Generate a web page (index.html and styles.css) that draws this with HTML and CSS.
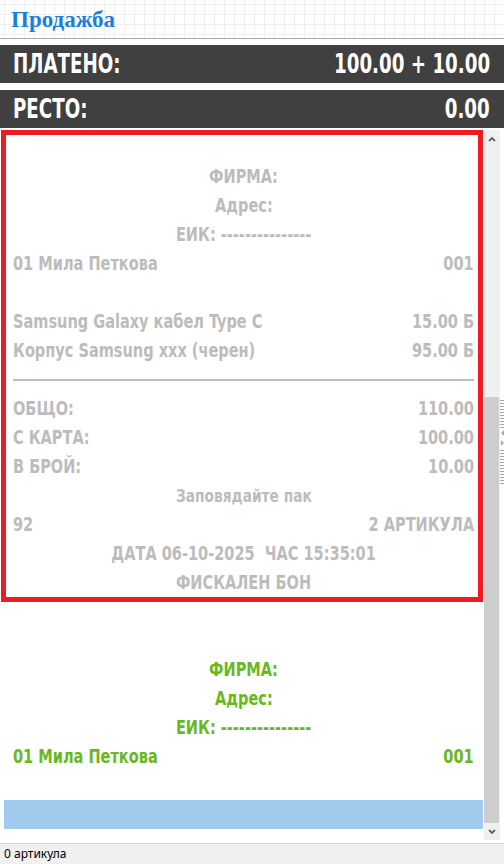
FILE: index.html
```html
<!DOCTYPE html>
<html lang="bg">
<head>
<meta charset="utf-8">
<title>Продажба</title>
<link rel="stylesheet" href="styles.css">
</head>
<body>
<div class="app">
  <header class="titlebar"><h1 class="title">Продажба</h1></header>
  <section class="totals">
    <div class="bar"><span class="bar-label">ПЛАТЕНО:</span><span class="bar-value">100.00 + 10.00</span></div>
    <div class="bar"><span class="bar-label">РЕСТО:</span><span class="bar-value">0.00</span></div>
  </section>
  <section class="viewport">
    <div class="list">
      <div class="receipt selected">
        <div class="line center"><span>ФИРМА:</span></div>
        <div class="line center"><span>Адрес:</span></div>
        <div class="line center"><span>ЕИК: ---------------</span></div>
        <div class="line split"><span>01 Мила Петкова</span><span>001</span></div>
        <div class="line"></div>
        <div class="line split"><span>Samsung Galaxy кабел Type C</span><span>15.00 Б</span></div>
        <div class="line split"><span>Корпус Samsung xxx (черен)</span><span>95.00 Б</span></div>
        <div class="line rule"><hr class="sep"></div>
        <div class="line split"><span>ОБЩО:</span><span>110.00</span></div>
        <div class="line split"><span>С КАРТА:</span><span>100.00</span></div>
        <div class="line split"><span>В БРОЙ:</span><span>10.00</span></div>
        <div class="line center small"><span>Заповядайте пак</span></div>
        <div class="line split"><span>92</span><span>2 АРТИКУЛА</span></div>
        <div class="line center"><span>ДАТА 06-10-2025&nbsp;&nbsp;ЧАС 15:35:01</span></div>
        <div class="line center"><span>ФИСКАЛЕН БОН</span></div>
      </div>
      <div class="receipt current">
        <div class="line center"><span>ФИРМА:</span></div>
        <div class="line center"><span>Адрес:</span></div>
        <div class="line center"><span>ЕИК: ---------------</span></div>
        <div class="line split"><span>01 Мила Петкова</span><span>001</span></div>
      </div>
      <div class="highlight"></div>
    </div>
    <div class="scrollbar">
      <div class="sb-btn">
        <svg width="8" height="6" viewBox="0 0 8 6"><path d="M1 5 L4 2 L7 5" fill="none" stroke="#606060" stroke-width="1.8"/></svg>
      </div>
      <div class="sb-space"></div>
      <div class="sb-thumb"></div>
      <div class="sb-btn">
        <svg width="8" height="6" viewBox="0 0 8 6"><path d="M1 1 L4 4 L7 1" fill="none" stroke="#606060" stroke-width="1.8"/></svg>
      </div>
    </div>
    <div class="grip">
      <svg class="grip-marks" width="4" height="86" viewBox="0 0 4 86">
        <g fill="#a8a8a8">
          <rect x="0" y="0" width="4" height="1"/><rect x="0" y="3" width="4" height="1"/>
          <rect x="0" y="6" width="4" height="1"/><rect x="0" y="9" width="4" height="1"/>
          <rect x="0" y="12" width="4" height="1"/><rect x="0" y="15" width="4" height="1"/>
          <rect x="0" y="18" width="4" height="1"/><rect x="0" y="21" width="4" height="1"/>
          <rect x="0" y="24" width="4" height="1"/><rect x="0" y="27" width="4" height="1"/>
          <path d="M4 30 L1 33 L4 36 Z"/>
          <path d="M1 40 L4 43 L1 46 Z"/>
          <rect x="0" y="50" width="4" height="1"/><rect x="0" y="53" width="4" height="1"/>
          <rect x="0" y="56" width="4" height="1"/><rect x="0" y="59" width="4" height="1"/>
          <rect x="0" y="62" width="4" height="1"/><rect x="0" y="65" width="4" height="1"/>
          <rect x="0" y="68" width="4" height="1"/><rect x="0" y="71" width="4" height="1"/>
          <rect x="0" y="74" width="4" height="1"/><rect x="0" y="77" width="4" height="1"/>
          <rect x="0" y="80" width="4" height="1"/><rect x="0" y="83" width="4" height="1"/>
        </g>
      </svg>
    </div>
  </section>
  <footer class="status">0 артикула</footer>
</div>
</body>
</html>
```

FILE: styles.css
```css
* { box-sizing: border-box; }
html, body { margin: 0; padding: 0; background: #ffffff; }
.app {
  width: 504px;
  height: 864px;
  display: flex;
  flex-direction: column;
  overflow: hidden;
}
.titlebar {
  height: 39px;
  flex: none;
  border-bottom: 1px solid #a8a8a8;
  background-color: #ffffff;
  background-image:
    linear-gradient(to right, #efefef 1px, transparent 1px),
    linear-gradient(to bottom, #efefef 1px, transparent 1px);
  background-size: 10px 10px;
  background-position: 4px 4px;
  padding-left: 11px;
}
.title {
  margin: 0;
  font-family: "Liberation Serif", "Times New Roman", serif;
  font-weight: bold;
  font-size: 23px;
  line-height: 39px;
  color: #1a7fdc;
}
.totals {
  flex: none;
  padding-top: 6px;
  display: flex;
  flex-direction: column;
  gap: 7px;
}
.bar {
  height: 38px;
  background: #404040;
  color: #ffffff;
  display: flex;
  justify-content: space-between;
  align-items: center;
  padding: 0 14px 0 13px;
  font-family: "DejaVu Sans Condensed", "DejaVu Sans", sans-serif;
  font-weight: bold;
  font-size: 26px;
  white-space: nowrap;
}
.bar-label, .bar-value {
  display: inline-block;
  transform: scaleX(0.78);
}
.bar-label { transform-origin: left center; }
.bar-value { transform-origin: right center; }
.viewport {
  flex: none;
  margin-top: 2px;
  height: 710px;
  display: flex;
}
.list {
  width: 484px;
  flex: none;
  overflow: hidden;
}
.receipt {
  margin-left: 1px;
  width: 482px;
  border: 5px solid transparent;
  padding: 27px 4px 0 7px;
  font-family: "DejaVu Sans Condensed", "DejaVu Sans", sans-serif;
  font-weight: bold;
  font-size: 19px;
  color: #bcbcbc;
}
.receipt.selected { border-color: #ed1c24; }
.receipt.current { color: #6ab820; padding-top: 48px; border-bottom: 0; }
.line {
  height: 29px;
  line-height: 29px;
  white-space: nowrap;
}
.line > span {
  display: inline-block;
  transform: scaleX(0.85);
}
.center { text-align: center; }
.center > span { transform-origin: center center; }
.small { font-size: 18px; }
.split { display: flex; justify-content: space-between; }
.split > span:first-child { transform-origin: left center; }
.split > span:last-child { transform-origin: right center; }
.rule { display: flex; align-items: center; }
.sep {
  width: 100%;
  margin: 0;
  border: 0;
  height: 2px;
  background: #bdbdbd;
}
.highlight {
  margin: 29px 0 0 4px;
  width: 479px;
  height: 29px;
  background: #a0cbef;
}
.scrollbar {
  width: 16px;
  flex: none;
  display: flex;
  flex-direction: column;
  background: #f0f0f0;
}
.sb-btn {
  height: 17px;
  flex: none;
  display: flex;
  align-items: center;
  justify-content: center;
  padding-right: 1px;
}
.sb-space { height: 250px; flex: none; }
.sb-thumb { flex: 1; background: #cdcdcd; margin-right: 1px; }
.grip {
  width: 4px;
  flex: none;
  padding-top: 270px;
}
.grip-marks { display: block; }
.status {
  flex: none;
  margin-top: 3px;
  border-top: 1px solid #d4d4d4;
  background: #f0f0f0;
  height: 21px;
  padding-left: 4px;
  font-family: "Noto Sans", "Open Sans", sans-serif;
  font-size: 12px;
  line-height: 20px;
  color: #000000;
}
```
